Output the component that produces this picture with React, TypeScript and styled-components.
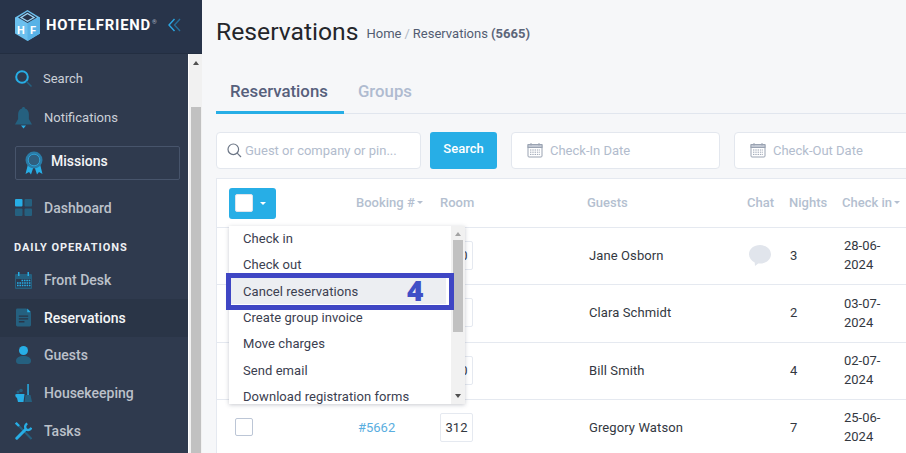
import React from 'react';
import styled, { createGlobalStyle } from 'styled-components';

const GlobalStyle = createGlobalStyle`
  html, body {
    margin: 0;
    padding: 0;
    height: 100%;
    overflow: hidden;
    font-family: Roboto, "Liberation Sans", sans-serif;
    background: #f6f7f9;
  }
  * { box-sizing: border-box; }
`;

const BLUE = '#27aee6';
const DIM = '#25607f';

const Page = styled.div`
  display: flex;
  width: 906px;
  height: 453px;
  overflow: hidden;
`;

/* ---------- sidebar ---------- */
const Sidebar = styled.aside`
  flex: 0 0 202px;
  display: flex;
  flex-direction: column;
  background: #2f3a4e;
`;

const LogoBar = styled.div`
  height: 54px;
  display: flex;
  align-items: center;
  padding: 0 0 3px 15px;
  background: #28344a;
  border-bottom: 1px solid #232e41;
`;

const LogoText = styled.span`
  margin-left: 6px;
  font-size: 14.8px;
  font-weight: 700;
  letter-spacing: 0.82px;
  color: #fff;
  sup {
    font-size: 6px;
    font-weight: 400;
    color: #aeb6c2;
    vertical-align: 6px;
    margin-left: 1px;
    letter-spacing: 0;
  }
`;

const Collapse = styled.svg`
  margin-left: 11px;
`;

const SideBody = styled.div`
  flex: 1;
  display: flex;
  min-height: 0;
`;

const Nav = styled.nav`
  flex: 0 0 188px;
  padding-top: 5px;
`;

const NavItem = styled.div<{ $active?: boolean; $small?: boolean }>`
  height: ${(p) => (p.$small ? '39px' : '37.7px')};
  display: flex;
  align-items: center;
  padding-left: 15px;
  font-size: ${(p) => (p.$small ? '13px' : '14px')};
  font-weight: ${(p) => (p.$small ? 400 : 500)};
  color: ${(p) => (p.$active ? '#f4f5f7' : p.$small ? '#cbd0d8' : '#bcc1ca')};
  background: ${(p) => (p.$active ? '#2a3547' : 'transparent')};
`;

const NavIcon = styled.svg`
  flex: 0 0 auto;
  margin-right: 12px;
`;

const MissionBox = styled.div`
  height: 34px;
  margin: 9px 8px 9px 15px;
  display: flex;
  align-items: center;
  padding-left: 9px;
  border: 1px solid #47546b;
  border-radius: 2px;
  font-size: 14px;
  font-weight: 500;
  color: #f4f5f7;
`;

const MissionLabel = styled.span`
  margin-top: -4px;
`;

const NavHeading = styled.div`
  height: 20px;
  margin-top: 11px;
  margin-bottom: 3.500px;
  padding-left: 14px;
  display: flex;
  align-items: center;
  font-size: 11px;
  font-weight: 700;
  letter-spacing: 0.95px;
  color: #eef0f3;
`;

const Scrollbar = styled.div`
  flex: 0 0 14px;
  display: flex;
  flex-direction: column;
  align-items: center;
  background: #f1f1f1;
  border-left: 1px solid #fff;
`;

const ArrowUp = styled.div`
  width: 0;
  height: 0;
  margin-top: 7px;
  border-left: 3.5px solid transparent;
  border-right: 3.5px solid transparent;
  border-bottom: 4px solid #505050;
`;

const SideThumb = styled.div`
  width: 10px;
  flex: 1;
  margin-top: 42px;
  background: #c1c1c1;
`;

/* ---------- main ---------- */
const Main = styled.main`
  flex: 1;
  min-width: 0;
  padding-left: 14px;
`;

const TitleRow = styled.div`
  height: 62px;
  display: flex;
  align-items: center;
`;

const Title = styled.h1`
  margin: 0 8px 0 0;
  font-size: 24.7px;
  font-weight: 400;
  color: #24262b;
`;

const Crumbs = styled.div`
  margin-top: 5px;
  font-size: 13px;
  color: #525c72;
  span { color: #b0b7c4; margin: 0 3px; }
  b { font-weight: 700; color: #5d667a; }
`;

const Tabs = styled.div`
  height: 52px;
  display: flex;
  align-items: flex-end;
  border-bottom: 1px solid #e1e6ee;
`;

const Tab = styled.div<{ $active?: boolean }>`
  height: 37px;
  margin-bottom: -1px;
  padding: 0 16px 0 14px;
  font-size: 16.800px;
  font-weight: 500;
  line-height: 28px;
  color: ${(p) => (p.$active ? '#56607c' : '#afbbd0')};
  border-bottom: 3px solid ${(p) => (p.$active ? BLUE : 'transparent')};
`;

const FilterRow = styled.div`
  display: flex;
  align-items: center;
  margin-top: 17px;
  height: 38px;
  width: 760px;
`;

const Field = styled.div<{ $w: number; $mr: number }>`
  flex: 0 0 ${(p) => p.$w}px;
  height: 37px;
  margin-right: ${(p) => p.$mr}px;
  display: flex;
  align-items: center;
  padding-left: ${(p) => (p.$w < 208 ? '9px' : '15px')};
  gap: ${(p) => (p.$w < 208 ? '2px' : '7px')};
  background: #fff;
  border: 1px solid #e3e7ee;
  border-radius: 4px;
  font-size: 13px;
  color: #b2bccd;
`;

const SearchButton = styled.button`
  flex: 0 0 67px;
  height: 37px;
  margin-right: 14px;
  padding: 0 0 4px;
  border: 0;
  border-radius: 3px;
  background: ${BLUE};
  color: #fff;
  font: 500 13px Roboto, sans-serif;
`;

const TableWrap = styled.div`
  position: relative;
  width: 760px;
  margin-top: 9px;
  background: #fff;
  border: 1px solid #e5e9f0;
  border-right: 0;
`;

const COLUMNS = '139px 84px 147px 160px 42px 53px 1fr';

const HeadRow = styled.div`
  height: 49px;
  display: grid;
  grid-template-columns: ${COLUMNS};
  align-items: center;
  border-bottom: 1px solid #e5e9f0;
  font-size: 13px;
  font-weight: 500;
  color: #b4bfd0;
`;

const HeadLabel = styled.div`
  padding-bottom: 2px;
`;

const SortCell = styled.div`
  display: flex;
  align-items: center;
  gap: 2px;
  padding-bottom: 2px;
  i {
    width: 0;
    height: 0;
    margin-top: 1px;
    border-left: 3px solid transparent;
    border-right: 3px solid transparent;
    border-top: 3px solid #b4bfd0;
  }
`;

const SelectAll = styled.div`
  width: 47px;
  height: 31px;
  margin-left: 12px;
  display: flex;
  align-items: center;
  padding-left: 6px;
  border-radius: 3px;
  background: ${BLUE};
  i {
    width: 0;
    height: 0;
    margin-left: 7px;
    border-left: 3px solid transparent;
    border-right: 3px solid transparent;
    border-top: 3px solid #fff;
  }
`;

const CheckBox = styled.div<{ $head?: boolean }>`
  width: 18px;
  height: 18px;
  margin-left: ${(p) => (p.$head ? '0' : '18px')};
  background: #fff;
  border: 1px solid ${(p) => (p.$head ? '#dfe4ec' : '#bcc6d6')};
  border-radius: 2px;
`;

const Row = styled.div<{ $h: number }>`
  height: ${(p) => p.$h}px;
  padding-bottom: 2px;
  display: grid;
  grid-template-columns: ${COLUMNS};
  align-items: center;
  border-bottom: 1px solid #e5e9f0;
  font-size: 13px;
  color: #33383f;
`;

const BookingLink = styled.a`
  color: #5aaee0;
  margin-left: 2px;
`;

const RoomBox = styled.div`
  width: 33px;
  height: 29px;
  display: flex;
  align-items: center;
  justify-content: center;
  border: 1px solid #e5e9f0;
  border-radius: 2px;
  color: #33383f;
`;

const GuestName = styled.div`
  padding-left: 2px;
  letter-spacing: 0.1px;
`;

const ChatCell = styled.div`
  display: flex;
  padding-left: 2px;
`;

const NightCell = styled.div`
  padding-left: 1px;
`;

const DateCell = styled.div`
  padding-left: 2px;
  width: 54px;
  line-height: 19px;
`;

const Menu = styled.div`
  position: absolute;
  left: 12px;
  top: 47px;
  width: 236px;
  height: 178px;
  display: flex;
  background: #fff;
  box-shadow: 0 1px 4px rgba(60, 70, 90, 0.28);
  z-index: 2;
`;

const MenuList = styled.div`
  flex: 1;
  min-width: 0;
  overflow: hidden;
`;

const MenuItem = styled.div<{ $hover?: boolean }>`
  height: 26.3px;
  position: relative;
  top: -0.5px;
  margin-right: 5px;
  padding-left: 14px;
  display: flex;
  align-items: center;
  font-size: 13px;
  letter-spacing: 0.06px;
  color: #3b4050;
  background: ${(p) => (p.$hover ? '#eceef2' : 'transparent')};
`;

const MenuBar = styled.div`
  flex: 0 0 14px;
  display: flex;
  flex-direction: column;
  align-items: center;
  background: #f1f1f1;
`;

const MenuThumb = styled.div`
  width: 10px;
  height: 92px;
  margin-top: 4px;
  background: #c1c1c1;
`;

const MenuArrow = styled.div<{ $down?: boolean }>`
  width: 0;
  height: 0;
  margin-top: ${(p) => (p.$down ? '62px' : '6px')};
  border-left: 3.5px solid transparent;
  border-right: 3.5px solid transparent;
  ${(p) => (p.$down ? 'border-top: 4px solid #505050;' : 'border-bottom: 4px solid #a3a3a3;')}
`;

const Callout = styled.div`
  position: absolute;
  left: 9px;
  top: 94px;
  width: 228px;
  height: 37px;
  border: 5px solid #3f46c4;
  z-index: 3;
  color: #404fc6;
  font-size: 28px;
  font-weight: 800;
  line-height: 24px;
  padding-left: 176px;
  font-family: "Open Sans", Roboto, sans-serif;
`;

const rows = [
  { h: 57, room: '310', name: 'Jane Osborn', chat: true, nights: 3, date: '28-06-2024' },
  { h: 58, room: '21', name: 'Clara Schmidt', chat: false, nights: 2, date: '03-07-2024' },
  { h: 57, room: '310', name: 'Bill Smith', chat: false, nights: 4, date: '02-07-2024' },
  { h: 57, room: '312', name: 'Gregory Watson', chat: false, nights: 7, date: '25-06-2024', booking: '#5662' },
];

const menuItems = [
  'Check in',
  'Check out',
  'Cancel reservations',
  'Create group invoice',
  'Move charges',
  'Send email',
  'Download registration forms',
];

const CalendarIcon = () => (
  <svg width="16" height="16" viewBox="0 0 16 16" fill="none" stroke="#9aa3b2">
    <rect x="1" y="2.5" width="14" height="12.5" rx="1" />
    <rect x="1" y="2.5" width="14" height="3" fill="#c3c9d4" />
    <path d="M4 1v2.5M12 1v2.5" />
    <path d="M3 8h10M3 10.2h10M3 12.4h10" strokeDasharray="1.4 .9" />
  </svg>
);

const App: React.FC = () => (
  <>
    <GlobalStyle />
    <Page>
      <Sidebar>
        <LogoBar>
          <svg width="25" height="31" viewBox="0 0 25 31">
            <path d="M12.5 0L25 7.500v16L12.500 31 0 23.500v-16z" fill="#6cc0ee" />
            <path d="M12.500 11L25 7.500v16L12.500 31z" fill="#58b2e6" />
            <path d="M12.500 1.500L22 7.500l-9.500 5.500L3 7.500z" fill="#28344a" />
            <path d="M12.500 3.500L19 7.500l-6.500 3.800L6 7.500z" fill="none" stroke="#9ed6f5" strokeWidth="1.300" />
            <text x="2" y="24" fontSize="11" fontWeight="700" fill="#fff" fontFamily="Roboto">H</text>
            <text x="15" y="23.500" fontSize="11" fontWeight="700" fill="#fff" fontFamily="Roboto">F</text>
          </svg>
          <LogoText>
            HOTELFRIEND<sup>®</sup>
          </LogoText>
          <Collapse width="13" height="14" viewBox="0 0 13 14" fill="none" strokeWidth="1.400">
            <path d="M6.500 1L1 7l5.500 6" stroke="#2ba7e4" />
            <path d="M12 1L6.500 7l5.500 6" stroke="#256f9b" />
          </Collapse>
        </LogoBar>
        <SideBody>
          <Nav>
            <NavItem $small>
              <NavIcon width="17" height="18" viewBox="0 0 17 18" fill="none" style={{ marginRight: 11 }}>
                <circle cx="7" cy="7" r="5.800" stroke={BLUE} strokeWidth="2" />
                <path d="M11.500 11.500L16.500 16.500" stroke={DIM} strokeWidth="1.500" />
              </NavIcon>
              Search
            </NavItem>
            <NavItem $small>
              <NavIcon width="17" height="22" viewBox="0 0 17 22">
                <path d="M8.500 0c1 0 1.500.7 1.500 1.600 2.700.8 3.900 3 3.900 6v4.400L17 17.500H0l3.100-5.500V7.600c0-3 1.200-5.200 3.900-6C7 .7 7.500 0 8.500 0z" fill={DIM} />
                <path d="M6 18.500h5L8.500 21.500z" fill={BLUE} />
              </NavIcon>
              Notifications
            </NavItem>
            <MissionBox>
              <NavIcon width="18" height="24" viewBox="0 0 18 24" style={{ marginRight: 8 }}>
                <path d="M3 13L0.500 23l3.500-2 2 2.500L8.500 16zM15 13l2.500 10-3.500-2-2 2.500L9.500 16z" fill={BLUE} />
                <circle cx="9" cy="9" r="8.500" fill="#2a7ba6" />
                <circle cx="9" cy="9" r="5.800" fill="#2f5f80" stroke="#2f9fd4" strokeWidth="1" />
              </NavIcon>
              <MissionLabel>Missions</MissionLabel>
            </MissionBox>
            <NavItem>
              <NavIcon width="17" height="17" viewBox="0 0 17 17">
                <rect width="7.500" height="7.500" rx="1" fill={BLUE} />
                <rect x="9.500" width="7.500" height="7.500" rx="1" fill={DIM} />
                <rect y="9.500" width="7.500" height="7.500" rx="1" fill={DIM} />
                <rect x="9.500" y="9.500" width="7.500" height="7.500" rx="1" fill={DIM} />
              </NavIcon>
              Dashboard
            </NavItem>
            <NavHeading>DAILY OPERATIONS</NavHeading>
            <NavItem>
              <NavIcon width="17" height="17" viewBox="0 0 17 17">
                <rect y="2" width="17" height="15" rx="1" fill={DIM} />
                <rect x="1" y="7" width="15" height="8.500" fill="#2b3a50" />
                <rect x="3" y="0" width="1.500" height="4" fill={BLUE} />
                <rect x="12.500" y="0" width="1.500" height="4" fill={BLUE} />
                <path d="M6.500 8.500h9M2 11h13.500M2 13.500h13.500" stroke={BLUE} strokeWidth="1.400" strokeDasharray="1.600 .8" />
              </NavIcon>
              Front Desk
            </NavItem>
            <NavItem $active>
              <NavIcon width="15" height="19" viewBox="0 0 16 19" style={{ marginRight: 13, marginLeft: 1 }}>
                <path d="M1.500 0H11l5 5v12.500a1.500 1.500 0 0 1-1.500 1.500h-13A1.500 1.500 0 0 1 0 17.500v-16A1.500 1.500 0 0 1 1.500 0z" fill={DIM} />
                <path d="M12 0l4 4h-4z" fill={BLUE} />
                <path d="M3 8h10M3 11h10M3 14h6" stroke="#2a3547" strokeWidth="1.400" />
              </NavIcon>
              Reservations
            </NavItem>
            <NavItem>
              <NavIcon width="15" height="18" viewBox="0 0 15 18" style={{ marginRight: 13, marginLeft: 1 }}>
                <circle cx="7.500" cy="4.500" r="4.500" fill={BLUE} />
                <path d="M0 15c0-3.500 3-5 7.500-5s7.500 1.500 7.500 5c0 2-1.500 3-3 3H3c-1.500 0-3-1-3-3z" fill={DIM} />
              </NavIcon>
              Guests
            </NavItem>
            <NavItem>
              <NavIcon width="17" height="18" viewBox="0 0 17 18">
                <path d="M1 10h8.500l-1 8H3z" fill={BLUE} />
                <circle cx="3" cy="8" r="1.500" fill={DIM} />
                <circle cx="6" cy="6.500" r="1.800" fill={DIM} />
                <path d="M0 10.500h3v3H1z" fill={BLUE} />
                <rect x="12.300" y="0" width="1.500" height="11" fill={BLUE} />
                <path d="M10.500 11h5l1.500 7h-7.500z" fill={DIM} />
              </NavIcon>
              Housekeeping
            </NavItem>
            <NavItem>
              <NavIcon width="17" height="18" viewBox="0 0 17 18" fill="none">
                <path d="M3 3l13.500 14" stroke={DIM} strokeWidth="2" />
                <path d="M0.800 0.800l3.200 3.200" stroke={BLUE} strokeWidth="2.400" />
                <path d="M1.800 16.200L10.500 7.500" stroke={BLUE} strokeWidth="3" strokeLinecap="round" />
                <path d="M12.300 1.500C10 2.500 9.600 5.500 11 7.200c1.700 1.400 4.500 1 5.300-1.500" stroke={BLUE} strokeWidth="2.400" />
              </NavIcon>
              Tasks
            </NavItem>
          </Nav>
          <Scrollbar>
            <ArrowUp />
            <SideThumb />
          </Scrollbar>
        </SideBody>
      </Sidebar>

      <Main>
        <TitleRow>
          <Title>Reservations</Title>
          <Crumbs>
            Home<span>/</span>Reservations <b>(5665)</b>
          </Crumbs>
        </TitleRow>
        <Tabs>
          <Tab $active>Reservations</Tab>
          <Tab>Groups</Tab>
        </Tabs>
        <FilterRow>
          <Field $w={205} $mr={9}>
            <svg width="17" height="17" viewBox="0 0 17 17" fill="none" stroke="#6c7686" strokeWidth="1.200">
              <circle cx="7.300" cy="7.300" r="5.300" />
              <path d="M11.200 11.200L15 15" />
            </svg>
            Guest or company or pin...
          </Field>
          <SearchButton>Search</SearchButton>
          <Field $w={209} $mr={14}>
            <CalendarIcon />
            Check-In Date
          </Field>
          <Field $w={209} $mr={0}>
            <CalendarIcon />
            Check-Out Date
          </Field>
        </FilterRow>
        <TableWrap>
          <HeadRow>
            <SelectAll>
              <CheckBox $head />
              <i />
            </SelectAll>
            <SortCell>
              Booking #<i />
            </SortCell>
            <HeadLabel>Room</HeadLabel>
            <HeadLabel>Guests</HeadLabel>
            <HeadLabel>Chat</HeadLabel>
            <HeadLabel>Nights</HeadLabel>
            <SortCell>
              Check in<i />
            </SortCell>
          </HeadRow>
          {rows.map((r) => (
            <Row key={r.name} $h={r.h}>
              <CheckBox />
              <BookingLink>{r.booking}</BookingLink>
              <RoomBox>{r.room}</RoomBox>
              <GuestName>{r.name}</GuestName>
              <ChatCell>
                {r.chat && (
                  <svg width="22" height="21" viewBox="0 0 22 21">
                    <path d="M11 0C17 0 22 3.800 22 9.300S17 18.500 11 18.500c-.6 0-1.200 0-1.800-.1L6 21l-.3-3.600C2.300 15.800 0 13 0 9.300 0 3.800 5 0 11 0z" fill="#e1e5ec" />
                  </svg>
                )}
              </ChatCell>
              <NightCell>{r.nights}</NightCell>
              <DateCell>{r.date}</DateCell>
            </Row>
          ))}
          <Menu>
            <MenuList>
              {menuItems.map((m) => (
                <MenuItem key={m} $hover={m === 'Cancel reservations'}>
                  {m}
                </MenuItem>
              ))}
            </MenuList>
            <MenuBar>
              <MenuArrow />
              <MenuThumb />
              <MenuArrow $down />
            </MenuBar>
          </Menu>
          <Callout>4</Callout>
        </TableWrap>
      </Main>
    </Page>
  </>
);

export default App;
